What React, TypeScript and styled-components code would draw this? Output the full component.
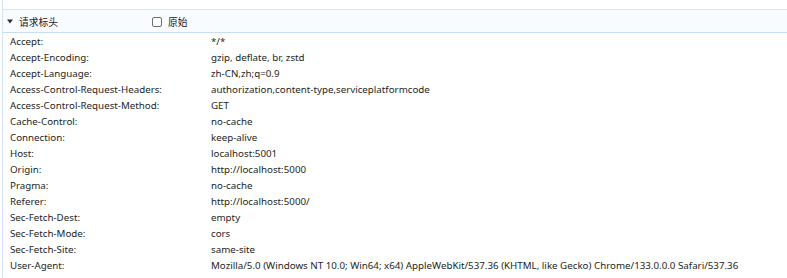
import React from "react";
import styled, { createGlobalStyle } from "styled-components";

const Global = createGlobalStyle`
  html, body { margin: 0; padding: 0; background: #ffffff; }
  body { font-family: "Noto Sans", "Noto Sans CJK SC", sans-serif; }
`;

const Page = styled.div`
  width: 787px;
  height: 278px;
  box-sizing: border-box;
  padding-left: 2px;
  overflow: hidden;
`;

const Panel = styled.div`
  border-left: 1px solid #d3e2f8;
  height: 100%;
  padding-top: 9px;
  box-sizing: border-box;
`;

const Header = styled.div`
  display: flex;
  align-items: center;
  height: 24px;
  padding-top: 1px;
  box-sizing: border-box;
  background: #f8fbff;
  border-top: 1px solid #dde3f3;
  border-bottom: 1px solid #c8dbf7;
  font-size: 9.75px;
  color: #222;
`;

const Toggle = styled.div`
  display: flex;
  align-items: center;
  width: 145px;
  padding-left: 4px;
  gap: 6px;
`;

const CheckLabel = styled.label`
  display: flex;
  align-items: center;
  gap: 6px;
`;

const Box = styled.span`
  width: 8px;
  height: 8px;
  border: 1px solid #6f6f6f;
  border-radius: 2px;
  background: #fff;
`;

const Rows = styled.div`
  display: flex;
  flex-direction: column;
  padding: 1px 0 0 7px;
`;

const Row = styled.div`
  display: grid;
  grid-template-columns: 201px 1fr;
  height: 16px;
  line-height: 16px;
  font-size: 9.75px;
  color: #1e1e1e;
  white-space: nowrap;
`;

const headers: [string, string][] = [
  ["Accept:", "*/*"],
  ["Accept-Encoding:", "gzip, deflate, br, zstd"],
  ["Accept-Language:", "zh-CN,zh;q=0.9"],
  ["Access-Control-Request-Headers:", "authorization,content-type,serviceplatformcode"],
  ["Access-Control-Request-Method:", "GET"],
  ["Cache-Control:", "no-cache"],
  ["Connection:", "keep-alive"],
  ["Host:", "localhost:5001"],
  ["Origin:", "http://localhost:5000"],
  ["Pragma:", "no-cache"],
  ["Referer:", "http://localhost:5000/"],
  ["Sec-Fetch-Dest:", "empty"],
  ["Sec-Fetch-Mode:", "cors"],
  ["Sec-Fetch-Site:", "same-site"],
  [
    "User-Agent:",
    "Mozilla/5.0 (Windows NT 10.0; Win64; x64) AppleWebKit/537.36 (KHTML, like Gecko) Chrome/133.0.0.0 Safari/537.36",
  ],
];

function Caret() {
  return (
    <svg width="6" height="5" viewBox="0 0 6 5">
      <path d="M0 0.5 L6 0.5 L3 4.5 Z" fill="#333" />
    </svg>
  );
}

export default function App() {
  return (
    <>
      <Global />
      <Page>
        <Panel>
          <Header>
            <Toggle>
              <Caret />
              <span>请求标头</span>
            </Toggle>
            <CheckLabel>
              <Box />
              <span>原始</span>
            </CheckLabel>
          </Header>
          <Rows>
            {headers.map(([k, v]) => (
              <Row key={k}>
                <span>{k}</span>
                <span>{v}</span>
              </Row>
            ))}
          </Rows>
        </Panel>
      </Page>
    </>
  );
}
